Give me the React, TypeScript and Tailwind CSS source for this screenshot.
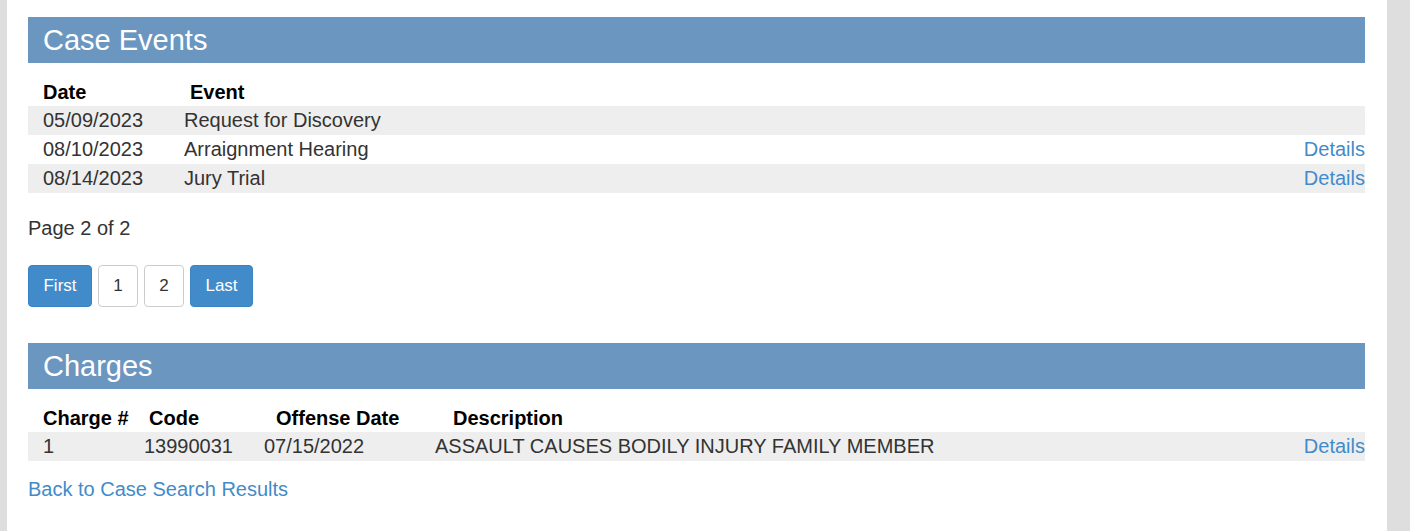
import React from 'react';

const events = [
  { date: '05/09/2023', event: 'Request for Discovery', details: false },
  { date: '08/10/2023', event: 'Arraignment Hearing', details: true },
  { date: '08/14/2023', event: 'Jury Trial', details: true },
];

function SectionBar({ title }: { title: string }) {
  return (
    <div className="flex h-[46px] items-center bg-[#6b96c0] pl-[15px] text-[29px] leading-none text-white">
      {title}
    </div>
  );
}

function DetailsLink() {
  return <a className="cursor-pointer text-[#428bca] hover:underline">Details</a>;
}

function CaseEvents() {
  return (
    <section>
      <SectionBar title="Case Events" />
      <div className="mt-[14px] flex h-[29px] items-center font-bold text-black">
        <div className="w-[162px] pl-[15px]">Date</div>
        <div>Event</div>
      </div>
      {events.map((e, i) => (
        <div
          key={e.date}
          className={`flex h-[29px] items-center pb-[2px] ${i % 2 === 0 ? 'bg-[#eeeeee]' : 'bg-white'}`}
        >
          <div className="w-[156px] pl-[15px]">{e.date}</div>
          <div className="flex-1">{e.event}</div>
          {e.details && <DetailsLink />}
        </div>
      ))}
    </section>
  );
}

function Pager() {
  const blue = 'h-[42px] rounded-[4px] border border-[#3c83c3] bg-[#428bca] text-white';
  const plain = 'h-[42px] w-[40px] rounded-[4px] border border-[#cccccc] bg-white text-[#333]';
  return (
    <div className="mt-[22px] flex gap-[6px] text-[17px]">
      <button className={`${blue} w-[64px]`}>First</button>
      <button className={plain}>1</button>
      <button className={plain}>2</button>
      <button className={`${blue} w-[63px]`}>Last</button>
    </div>
  );
}

function Charges() {
  return (
    <section>
      <SectionBar title="Charges" />
      <div className="mt-[14px] flex h-[29px] items-center font-bold text-black">
        <div className="w-[121px] pl-[15px]">Charge #</div>
        <div className="w-[127px]">Code</div>
        <div className="w-[177px]">Offense Date</div>
        <div>Description</div>
      </div>
      <div className="flex h-[29px] items-center bg-[#eeeeee] pb-[2px]">
        <div className="w-[116px] pl-[15px]">1</div>
        <div className="w-[120px]">13990031</div>
        <div className="w-[171px]">07/15/2022</div>
        <div className="flex-1">ASSAULT CAUSES BODILY INJURY FAMILY MEMBER</div>
        <DetailsLink />
      </div>
    </section>
  );
}

export default function App() {
  return (
    <div
      className="flex h-[531px] w-full overflow-hidden bg-[#dedede] text-[20px] text-[#333]"
      style={{ fontFamily: '"Liberation Sans", Arial, sans-serif' }}
    >
      <div className="w-[7px] shrink-0" />
      <main className="w-[1380px] shrink-0 bg-white pl-[21px] pr-[22px] pt-[17px]">
        <CaseEvents />
        <div className="mt-[21px] flex h-[29px] items-center pb-[2px]">Page 2 of 2</div>
        <Pager />
        <div className="mt-[36px]">
          <Charges />
        </div>
        <div className="mt-[14px] flex h-[29px] items-center pb-[2px]">
          <a className="cursor-pointer text-[#428bca] hover:underline">Back to Case Search Results</a>
        </div>
      </main>
    </div>
  );
}
